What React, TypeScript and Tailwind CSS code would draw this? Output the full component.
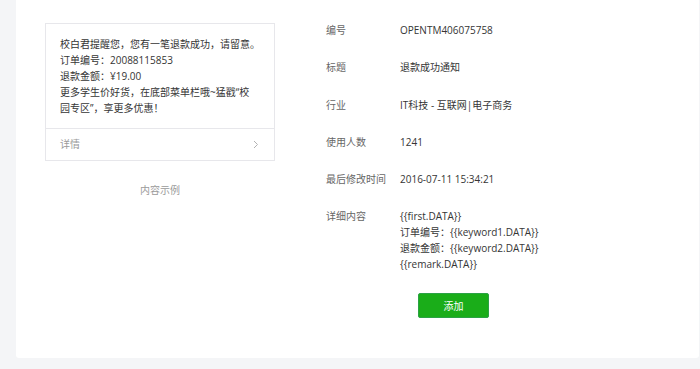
import React from "react";

const font = { fontFamily: '"Open Sans", "Noto Sans CJK SC", sans-serif' };

export default function App() {
  const rows: [string, string][] = [
    ["编号", "OPENTM406075758"],
    ["标题", "退款成功通知"],
    ["行业", "IT科技 - 互联网|电子商务"],
    ["使用人数", "1241"],
    ["最后修改时间", "2016-07-11 15:34:21"],
  ];
  return (
    <div className="w-[700px] h-[369px] bg-[#f4f5f7] overflow-hidden" style={font}>
      <div className="ml-[16px] mr-[1px] h-[358px] bg-white rounded-b-[3px] flex pl-[29px] pt-[23px] text-[10px] text-[#353535]">
        <div className="w-[230px] flex flex-col items-stretch">
          <div className="border border-[#e7e7eb]">
            <div className="pl-[14px] pr-[8px] pt-[12px] pb-[12px] leading-[16px] whitespace-nowrap">
              <p>校白君提醒您，您有一笔退款成功，请留意。</p>
              <p>订单编号：20088115853</p>
              <p>退款金额：¥19.00</p>
              <p>
                更多学生价好货，在底部菜单栏哦~猛戳“校
                <br />
                园专区”，享更多优惠！
              </p>
            </div>
            <div className="border-t border-[#e7e7eb] h-[32px] px-[14px] flex items-center justify-between text-[#9a9a9a]">
              <span>详情</span>
              <svg width="6" height="9" viewBox="0 0 6 9" className="mr-[1px]">
                <path d="M1 1l3.5 3.5L1 8" fill="none" stroke="#b2b2b2" strokeWidth="1" />
              </svg>
            </div>
          </div>
          <div className="mt-[21px] text-center leading-[16px] text-[#9a9a9a]">内容示例</div>
        </div>
        <div className="ml-[51px] flex flex-col leading-[16px]">
          <div className="flex flex-col gap-[21.3px] -mt-[1px]">
            {rows.map(([k, v]) => (
              <div key={k} className="flex">
                <div className="w-[74px] text-[#666]">{k}</div>
                <div>{v}</div>
              </div>
            ))}
            <div className="flex">
              <div className="w-[74px] text-[#666]">详细内容</div>
              <div>
                <p>{"{{first.DATA}}"}</p>
                <p>订单编号：{"{{keyword1.DATA}}"}</p>
                <p>退款金额：{"{{keyword2.DATA}}"}</p>
                <p>{"{{remark.DATA}}"}</p>
              </div>
            </div>
          </div>
          <div className="mt-[21px] ml-[92px]">
            <button className="w-[71px] h-[25px] bg-[#1aad19] text-white rounded-[2px] border border-[#2ba245] text-[10px]">
              添加
            </button>
          </div>
        </div>
      </div>
    </div>
  );
}
